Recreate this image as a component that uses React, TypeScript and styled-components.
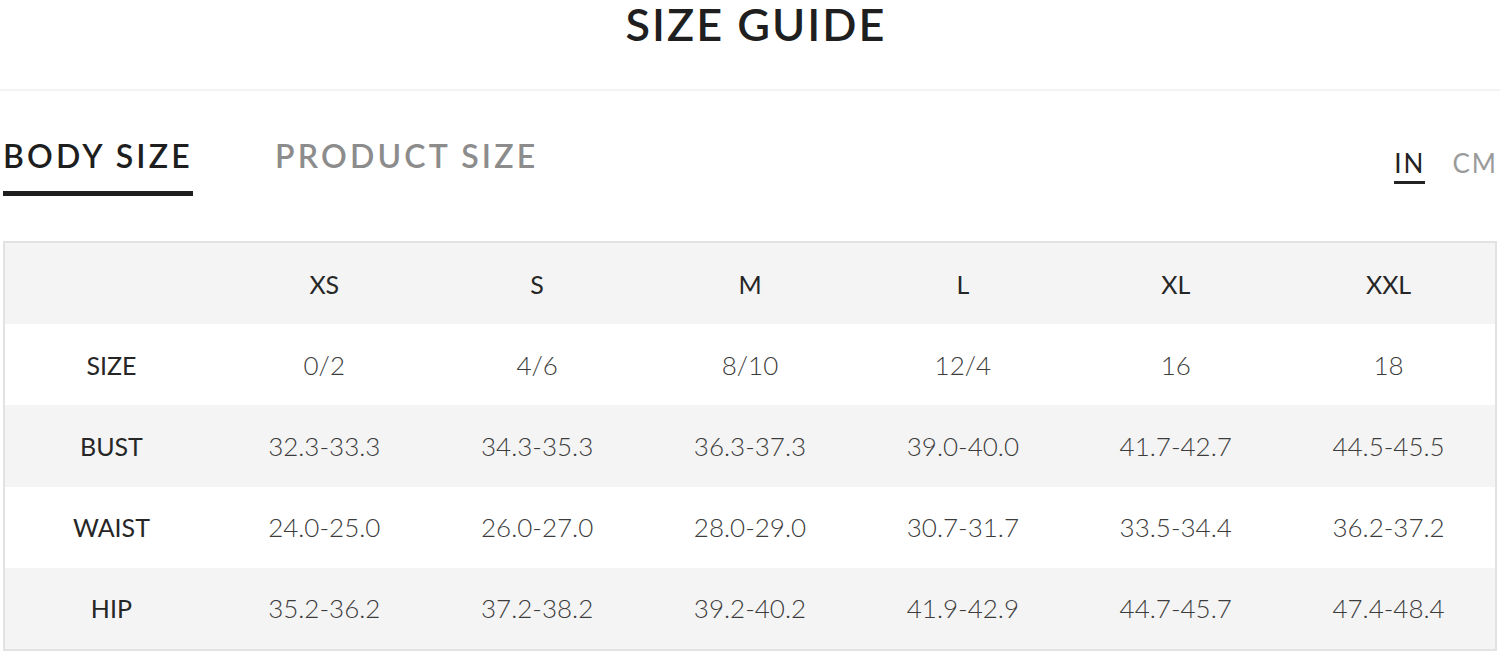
import React, { useState } from 'react';
import styled, { createGlobalStyle } from 'styled-components';

const GlobalStyle = createGlobalStyle`
  body {
    margin: 0;
    background: #fff;
    font-family: Lato, "Open Sans", sans-serif;
    color: #222;
  }
`

const Page = styled.div`
  width: 1500px;
  height: 653px;
  overflow: hidden;
`

const Title = styled.h1`
  margin: 0;
  padding-left: 12px;
  height: 89px;
  text-align: center;
  font-size: 45px;
  line-height: 48px;
  font-weight: 600;
  letter-spacing: 2px;
  color: #1f1f1f;
  border-bottom: 2px solid #f3f3f3;
`

const TabBar = styled.div`
  display: flex;
  align-items: flex-start;
  justify-content: space-between;
  padding: 45px 2px 0 3px;
  height: 150px;
  box-sizing: border-box;
`

const Tabs = styled.div`
  display: flex;
  gap: 82px;
`

const Tab = styled.div<{ active: boolean }>`
  font-size: 32px;
  line-height: 40px;
  font-weight: 600;
  letter-spacing: 3.2px;
  color: ${p => (p.active ? '#1e1e1e' : '#8c8c8c')};
  padding-bottom: 15px;
  border-bottom: 5px solid ${p => (p.active ? '#1e1e1e' : 'transparent')};
  cursor: pointer;
`

const Units = styled.div`
  display: flex;
  gap: 27px;
  padding-top: 12px;
`

const Unit = styled.div<{ active: boolean }>`
  font-size: 26px;
  line-height: 30px;
  letter-spacing: 2px;
  font-weight: 400;
  color: ${p => (p.active ? '#222' : '#9a9a9a')};
  padding-bottom: 3px;
  border-bottom: 3px solid ${p => (p.active ? '#222' : 'transparent')};
  cursor: pointer;
`

const Table = styled.div`
  margin: 0 3px;
  border: 2px solid #e2e2e2;
  display: grid;
  grid-template-columns: repeat(7, 1fr);
`

const Cell = styled.div<{ shade: boolean; head?: boolean }>`
  height: 81.2px;
  display: flex;
  align-items: center;
  justify-content: center;
  font-size: ${p => (p.head ? 25 : 26)}px;
  font-weight: ${p => (p.head ? 400 : 300)};
  color: ${p => (p.head ? '#262626' : '#3c3c3c')};
  background: ${p => (p.shade ? '#f4f4f4' : '#fff')};
`

const sizes = ['XS', 'S', 'M', 'L', 'XL', 'XXL'];

const rows: [string, string[]][] = [
  ['SIZE', ['0/2', '4/6', '8/10', '12/4', '16', '18']],
  ['BUST', ['32.3-33.3', '34.3-35.3', '36.3-37.3', '39.0-40.0', '41.7-42.7', '44.5-45.5']],
  ['WAIST', ['24.0-25.0', '26.0-27.0', '28.0-29.0', '30.7-31.7', '33.5-34.4', '36.2-37.2']],
  ['HIP', ['35.2-36.2', '37.2-38.2', '39.2-40.2', '41.9-42.9', '44.7-45.7', '47.4-48.4']],
];

const App: React.FC = () => {
  const [tab, setTab] = useState('body');
  const [unit, setUnit] = useState('in');

  return (
    <Page>
      <GlobalStyle />
      <Title>SIZE GUIDE</Title>
      <TabBar>
        <Tabs>
          <Tab active={tab === 'body'} onClick={() => setTab('body')}>BODY SIZE</Tab>
          <Tab active={tab === 'product'} onClick={() => setTab('product')}>PRODUCT SIZE</Tab>
        </Tabs>
        <Units>
          <Unit active={unit === 'in'} onClick={() => setUnit('in')}>IN</Unit>
          <Unit active={unit === 'cm'} onClick={() => setUnit('cm')}>CM</Unit>
        </Units>
      </TabBar>
      <Table>
        <Cell shade head />
        {sizes.map(s => (
          <Cell key={s} shade head>{s}</Cell>
        ))}
        {rows.map(([label, values], i) => (
          <React.Fragment key={label}>
            <Cell shade={i % 2 === 1} head>{label}</Cell>
            {values.map((v, j) => (
              <Cell key={j} shade={i % 2 === 1}>{v}</Cell>
            ))}
          </React.Fragment>
        ))}
      </Table>
    </Page>
  );
}

export default App;
